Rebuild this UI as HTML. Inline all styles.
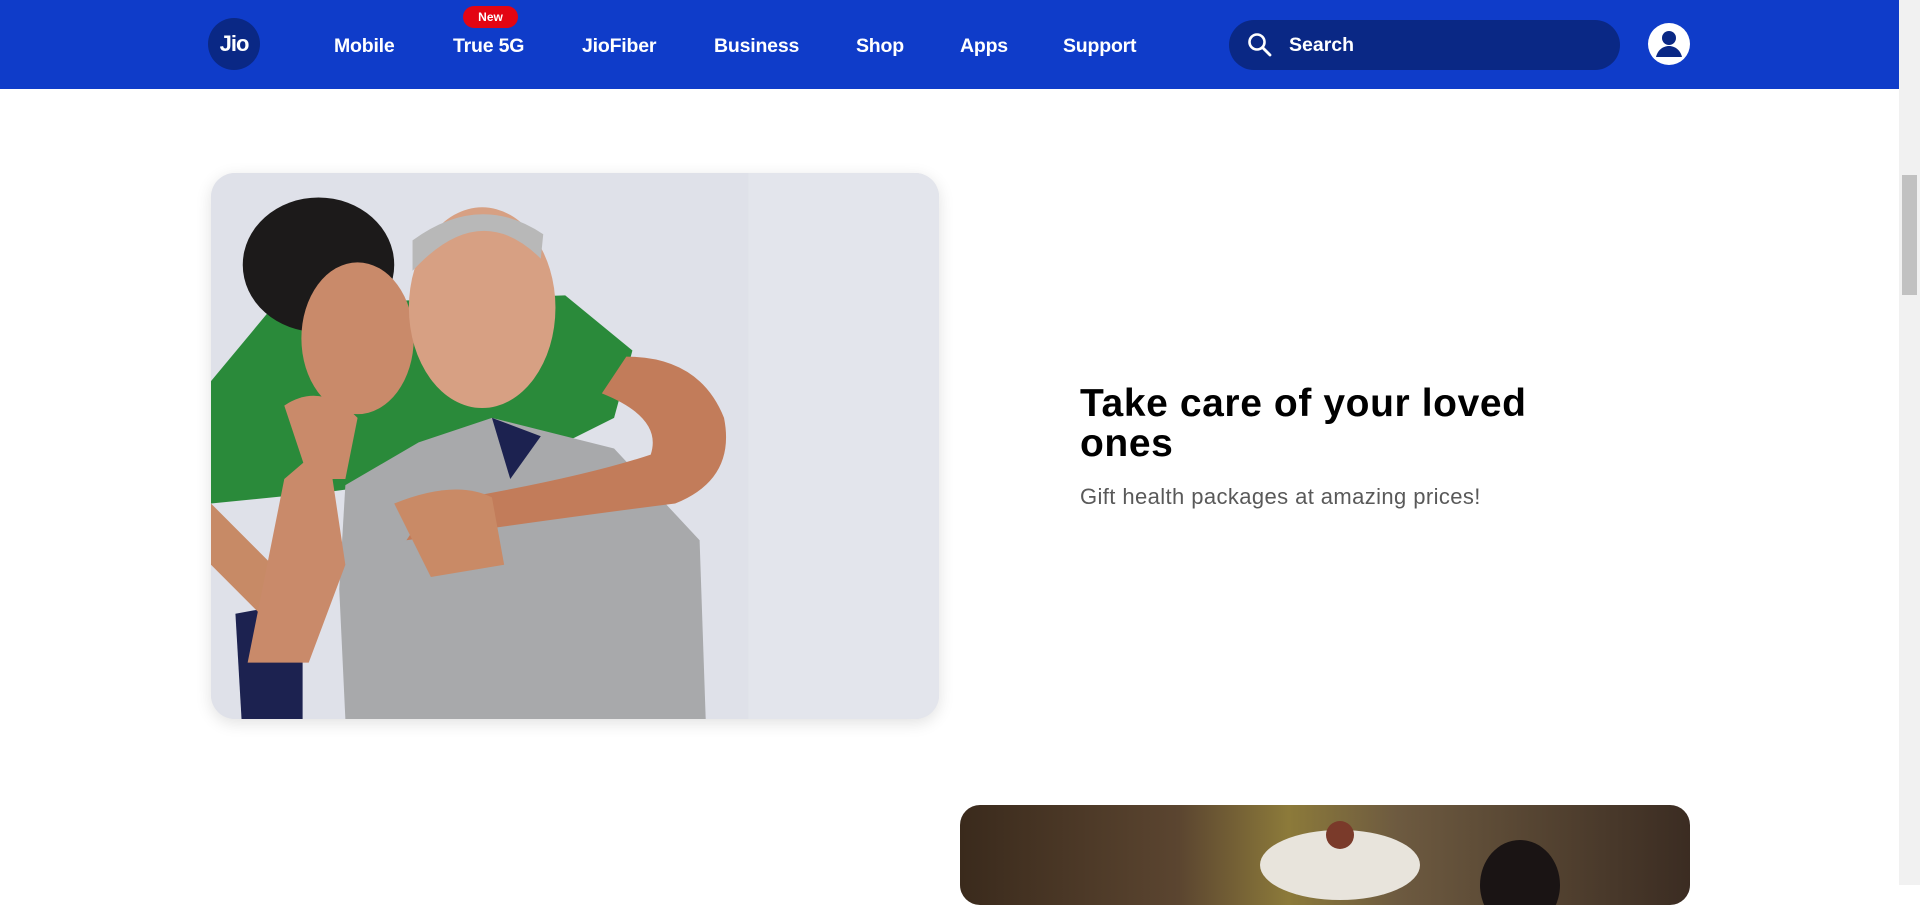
<!DOCTYPE html>
<html><head><meta charset="utf-8"><style>
*{margin:0;padding:0;box-sizing:border-box}
body{width:1920px;height:885px;overflow:hidden;background:#fff;font-family:"Liberation Sans",Arial,sans-serif;position:relative}
.hdr{position:absolute;left:0;top:0;width:1903px;height:89px;background:#0f3cc9}
.logo{position:absolute;left:208px;top:18px;width:52px;height:52px;border-radius:50%;background:#0a2885;color:#fff;font-weight:bold;font-size:22px;text-align:center;line-height:52px;letter-spacing:-1px}
.nav{position:absolute;top:35px;color:#fff;font-weight:bold;font-size:19.5px;letter-spacing:-0.2px}
.new{position:absolute;left:463px;top:6px;width:55px;height:22px;border-radius:11px;background:#e30513;color:#fff;font-size:12px;font-weight:bold;text-align:center;line-height:22px}
.search{position:absolute;left:1229px;top:20px;width:391px;height:50px;border-radius:25px;background:#0a2885;color:#fff;font-size:19.5px;font-weight:bold}
.search span{position:absolute;left:60px;top:14px}
.user{position:absolute;left:1648px;top:23px;width:42px;height:42px;border-radius:50%;background:#fff;overflow:hidden}
.sb{position:absolute;right:0;top:0;width:21px;height:885px;background:#f1f1f1}
.thumb{position:absolute;right:3px;top:175px;width:15px;height:120px;background:#c1c1c1}
.card{position:absolute;left:211px;top:173px;width:728px;height:546px;border-radius:24px;overflow:hidden;background:#dfe1e9;box-shadow:0 4px 16px rgba(0,0,0,.12)}
h2{position:absolute;left:1080px;top:384px;font-size:39px;line-height:40px;font-weight:bold;color:#000;letter-spacing:0.6px}
.sub{position:absolute;left:1080px;top:484px;font-size:22px;color:#595959;letter-spacing:0.4px}
.card2{position:absolute;left:960px;top:805px;width:730px;height:100px;border-radius:20px;overflow:hidden;background:linear-gradient(90deg,#3a2a1c 0%,#5b4530 30%,#8c7a3a 45%,#6d5a40 60%,#3b2c22 100%)}
</style></head><body>
<div class="hdr">
<div class="logo">Jio</div>
<div class="nav" style="left:334px">Mobile</div>
<div class="new">New</div>
<div class="nav" style="left:453px">True 5G</div>
<div class="nav" style="left:582px">JioFiber</div>
<div class="nav" style="left:714px">Business</div>
<div class="nav" style="left:856px">Shop</div>
<div class="nav" style="left:960px">Apps</div>
<div class="nav" style="left:1063px">Support</div>
<div class="search"><svg style="position:absolute;left:18px;top:12px" width="26" height="26" viewBox="0 0 26 26"><circle cx="10" cy="10" r="7.5" fill="none" stroke="#fff" stroke-width="2.6"/><path d="M15.5 15.5L23 23" stroke="#fff" stroke-width="2.8" stroke-linecap="round"/></svg><span>Search</span></div>
<div class="user"><svg width="42" height="42" viewBox="0 0 42 42"><circle cx="21" cy="15" r="7" fill="#0a2885"/><path d="M8 34c2-8 8-11 13-11s11 3 13 11z" fill="#0a2885"/></svg></div>
</div>
<div class="card"><svg width="728" height="546" viewBox="0 0 596 446" preserveAspectRatio="none">
<rect width="596" height="446" fill="#dfe1e9"/>
<rect x="440" width="156" height="446" fill="#e3e5ec"/>
<path d="M20 360L75 350L75 446L25 446Z" fill="#1c2250"/>
<path d="M0 170L50 110L130 105L290 100L345 145L330 200L250 240L100 260L0 270Z" fill="#2a8a3a"/>
<path d="M0 270L0 320L40 360L60 330Z" fill="#c78a66"/>
<ellipse cx="88" cy="75" rx="62" ry="55" fill="#1c1a1a"/>
<ellipse cx="120" cy="135" rx="46" ry="62" fill="#c98a6a"/>
<ellipse cx="222" cy="110" rx="60" ry="82" fill="#d7a083"/>
<path d="M165 80Q220 20 270 70L272 50Q220 15 165 55Z" fill="#b8b8b8"/>
<path d="M105 340L110 255L170 220L230 200L330 225L400 300L405 446L110 446Z" fill="#a8a9ab"/>
<path d="M230 200L245 250L270 215Z" fill="#1c2250"/>
<path d="M160 300Q300 280 380 270Q430 250 420 200Q400 150 340 150L320 180Q370 200 360 230Q300 250 180 270Z" fill="#c27c5a"/>
<path d="M150 270Q200 250 230 265L240 320L180 330Z" fill="#c98a66"/>
<path d="M30 400Q50 300 60 250L95 220L110 320L80 400Z" fill="#c98a6a"/>
<path d="M60 190Q90 170 120 200L110 250L80 250Z" fill="#c98a6a"/>
</svg></div>
<h2>Take care of your loved<br>ones</h2>
<div class="sub">Gift health packages at amazing prices!</div>
<div class="card2"><svg width="730" height="100" viewBox="0 0 730 100"><ellipse cx="380" cy="60" rx="80" ry="35" fill="#e8e4dc"/><circle cx="380" cy="30" r="14" fill="#7a3a2a"/><ellipse cx="560" cy="80" rx="40" ry="45" fill="#1a1414"/></svg></div>
<div class="sb"><div class="thumb"></div></div>
</body></html>
